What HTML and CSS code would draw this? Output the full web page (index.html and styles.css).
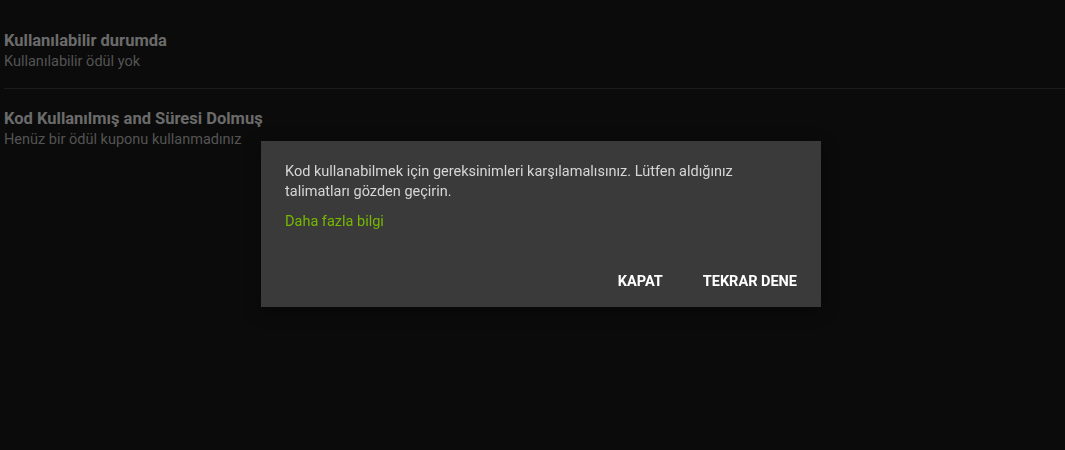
FILE: index.html
```html
<!DOCTYPE html>
<html lang="tr">
<head>
    <meta charset="UTF-8">
    <title>Ödüller</title>
    <link rel="stylesheet" href="styles.css">
</head>
<body>
    <div class="rewards">
        <section class="reward-group">
            <h2>Kullanılabilir durumda</h2>
            <p>Kullanılabilir ödül yok</p>
        </section>
        <section class="reward-group">
            <h2>Kod Kullanılmış and Süresi Dolmuş</h2>
            <p>Henüz bir ödül kuponu kullanmadınız</p>
        </section>
    </div>

    <div class="overlay">
        <div class="dialog">
            <p class="dialog-text">Kod kullanabilmek için gereksinimleri karşılamalısınız. Lütfen aldığınız talimatları gözden geçirin.</p>
            <a class="dialog-link" href="#">Daha fazla bilgi</a>
            <div class="dialog-actions">
                <button type="button">KAPAT</button>
                <button type="button">TEKRAR DENE</button>
            </div>
        </div>
    </div>
</body>
</html>
```

FILE: styles.css
```css
:root {
    --page-bg: #0b0b0b;
    --dialog-bg: #3a3a3a;
    --muted-title: #6b6b6b;
    --muted-text: #545454;
    --nv-green: #76b900;
}

* {
    margin: 0;
    padding: 0;
    box-sizing: border-box;
}

body {
    font-family: Roboto, 'Liberation Sans', sans-serif;
    background-color: var(--page-bg);
    color: #ddd;
    height: 450px;
    overflow: hidden;
}

.rewards {
    padding: 30px 0 0 4px;
}

.reward-group {
    padding-bottom: 16px;
    border-bottom: 1px solid #1c1c1c;
    margin-bottom: 19px;
}

.reward-group:last-child {
    border-bottom: none;
}

.reward-group h2 {
    font-size: 16.5px;
    font-weight: 700;
    line-height: 22px;
    color: var(--muted-title);
}

.reward-group p {
    font-size: 14.5px;
    line-height: 20px;
    color: var(--muted-text);
}

.overlay {
    position: fixed;
    inset: 0;
    display: flex;
    align-items: center;
    justify-content: center;
    padding: 0 0 2px 17px;
}

.dialog {
    width: 560px;
    height: 166px;
    background-color: var(--dialog-bg);
    padding: 21px 24px 15px;
    display: flex;
    flex-direction: column;
    box-shadow: 0 4px 16px rgba(0, 0, 0, 0.4);
}

.dialog-text {
    font-size: 14.5px;
    line-height: 20px;
    color: #d6d6d6;
    padding-right: 60px;
}

.dialog-link {
    margin-top: 10px;
    font-size: 14.5px;
    line-height: 20px;
    color: var(--nv-green);
    text-decoration: none;
}

.dialog-actions {
    margin-top: auto;
    display: flex;
    justify-content: flex-end;
    gap: 40px;
}

.dialog-actions button {
    background: none;
    border: none;
    font-family: inherit;
    font-size: 14.5px;
    font-weight: 700;
    color: #fff;
    line-height: 20px;
    cursor: pointer;
}
```
